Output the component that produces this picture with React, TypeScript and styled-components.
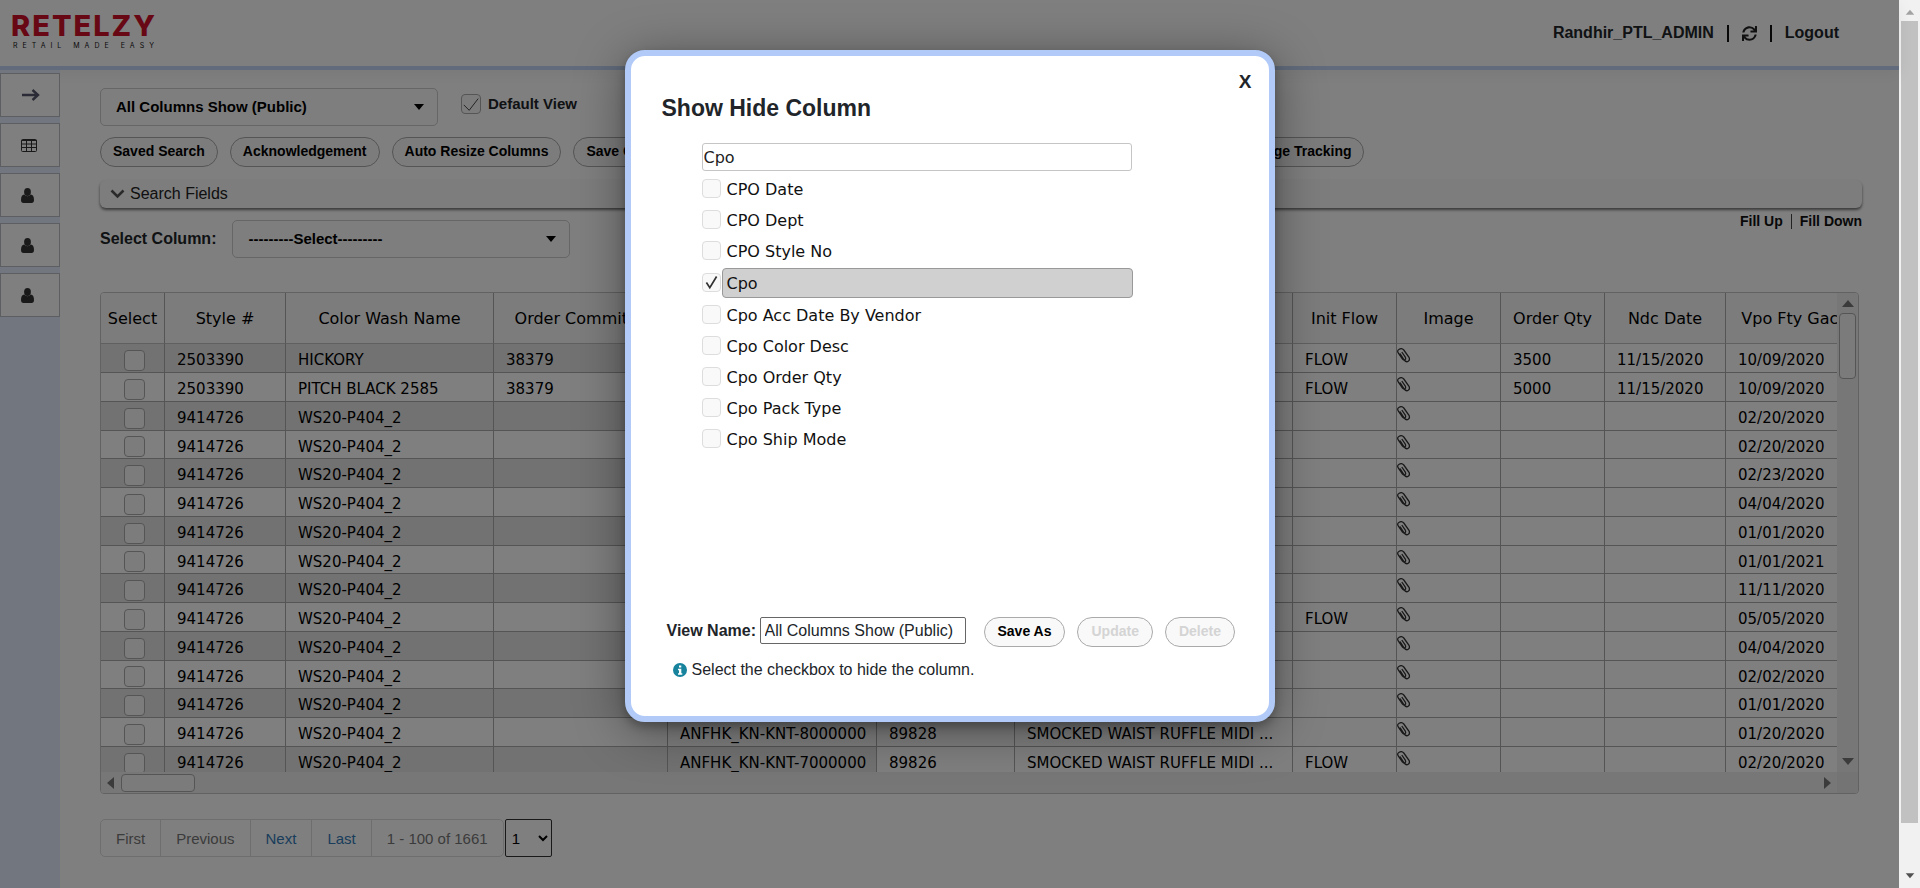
import React from "react";
import styled, { createGlobalStyle, css } from "styled-components";

const sans = `"Liberation Sans", Arial, sans-serif`;
const wide = `"DejaVu Sans", Verdana, sans-serif`;

const GlobalStyle = createGlobalStyle`
  *, *::before, *::after { box-sizing: border-box; }
  body { margin: 0; background: #fff; color: #212529; font: 16px/24px ${sans}; }
  button, input, select { font: inherit; color: inherit; margin: 0; }
  a { color: inherit; text-decoration: none; }
`;

const Shell = styled.div`
  display: flex;
  height: 100vh;
  overflow: hidden;
`;

const Page = styled.div`
  position: relative;
  display: flex;
  flex-direction: column;
  flex: 1;
  min-width: 0;
`;

const WindowScrollbar = styled.div`
  display: flex;
  flex-direction: column;
  align-items: center;
  width: 21px;
  padding: 7px 0;
  background: #f1f1f1;
`;

const WindowTrack = styled.div`
  flex: 1;
  width: 17px;
  margin: 4px 0;
  padding-bottom: 44px;
`;

const WindowThumb = styled.div`
  height: 100%;
  background: #c1c1c1;
`;

const Header = styled.header`
  display: flex;
  justify-content: space-between;
  height: 70px;
  padding: 9px 60px 0 11px;
  border-bottom: 4px solid #c3d7f7;
  box-shadow: 0 4px 16px rgba(0, 0, 0, 0.06);
`;

const Logo = styled.div`
  display: flex;
  flex-direction: column;
`;

const Wordmark = styled.span`
  font: 800 29px/33px Inter, sans-serif;
  letter-spacing: 2px;
  color: #d0112b;
`;

const Tagline = styled.span`
  padding-left: 2px;
  font: 7px/7px Inter, sans-serif;
  letter-spacing: 5px;
  color: #111;
`;

const UserNav = styled.nav`
  display: flex;
  align-items: center;
  gap: 13px;
  height: 48px;
  font-weight: 700;
`;

const NavBar = styled.span`
  width: 2px;
  height: 17px;
  background: #111;
`;

const IconButton = styled.button`
  display: flex;
  padding: 0;
  border: 0;
  background: none;
`;

const Body = styled.div`
  display: flex;
  flex: 1;
  min-height: 0;
`;

const Sidebar = styled.nav`
  display: flex;
  flex-direction: column;
  gap: 6px;
  width: 60px;
  padding-top: 3px;
  background: #e4ecff;
`;

const SideButton = styled.button`
  display: flex;
  align-items: center;
  height: 44px;
  padding: 0 0 0 20px;
  border: 1px solid #b9bdc4;
  background: #fff;
`;

const Main = styled.main`
  flex: 1;
  min-width: 0;
  padding: 18px 37px 0 40px;
`;

const ViewRow = styled.div`
  display: flex;
  gap: 23px;
`;

const SelectWrap = styled.div`
  display: grid;
  align-items: center;
  width: 338px;
  height: 38px;

  > * { grid-area: 1 / 1; }
  > svg { justify-self: end; margin-right: 13px; pointer-events: none; }
`;

const BigSelect = styled.select`
  width: 100%;
  height: 100%;
  padding: 0 15px;
  border: 1px solid #ccc;
  border-radius: 5px;
  appearance: none;
  background: #fcfcfc;
  color: #000;
  font-size: 15px;
  font-weight: 700;
`;

const TickLabel = styled.label`
  display: flex;
  align-items: center;
  gap: 7px;
  height: 32px;
  font-size: 15px;
  font-weight: 700;
`;

const tick = (path: string, stroke: string, w: number) =>
  `url("data:image/svg+xml,%3Csvg xmlns='http://www.w3.org/2000/svg' viewBox='0 0 20 20'%3E%3Cpath d='${path}' fill='none' stroke='%23${stroke}' stroke-width='${w}'/%3E%3C/svg%3E")`;

const Tick = styled.input.attrs({ type: "checkbox" })<{ $size: number; $line: string; $bold?: boolean }>`
  appearance: none;
  flex: none;
  width: ${(p) => p.$size}px;
  height: ${(p) => p.$size}px;
  border: 1px solid ${(p) => p.$line};
  border-radius: 4px;
  background: #f9f9f9;

  &:checked {
    background-image: ${(p) => (p.$bold ? tick("M4 10l4 6 8-13", "333", 2) : tick("M2 11l6 6L18 4", "333", 1))};
  }
`;

const ActionRow = styled.div`
  display: flex;
  gap: 12px;
  margin-top: 11px;
`;

const Pill = styled.button`
  height: 30px;
  padding: 0 12px 2px;
  border: 1px solid #aaa;
  border-radius: 15px;
  background: #f9f9f9;
  color: #000;
  font-size: 14px;
  font-weight: 700;
  white-space: nowrap;

  &:disabled { color: #d4d4d4; }
`;

const SearchPanel = styled.button`
  display: flex;
  align-items: center;
  gap: 5px;
  width: 100%;
  height: 28px;
  margin-top: 13px;
  padding: 0 10px;
  border: 0;
  border-radius: 6px;
  background: #fafafa;
  box-shadow: 0 2px 3px rgba(0, 0, 0, 0.55);
  color: #222;
`;

const ColumnRow = styled.div`
  display: flex;
  align-items: flex-start;
  gap: 16px;
  margin-top: 12px;
`;

const ColumnLabel = styled.label`
  padding-top: 7px;
  font-weight: 700;
`;

const FillLinks = styled.div`
  display: flex;
  align-items: center;
  gap: 8px;
  height: 2px;
  margin-left: auto;
  font-size: 14px;
  font-weight: 700;
  color: #111;
`;

const ThinBar = styled.span`
  width: 1px;
  height: 15px;
  background: #444;
`;

const Grid = styled.section`
  display: grid;
  grid-template-columns: minmax(0, 1fr) 21px;
  grid-template-rows: 479px 21px;
  margin: 34px 3px 0 0;
  border: 1px solid #c5c5c5;
  border-radius: 4px;
  overflow: hidden;
`;

const GridView = styled.div`
  overflow: hidden;
`;

const Table = styled.table`
  width: 1797px;
  table-layout: fixed;
  border-collapse: separate;
  border-spacing: 0;
  font: 15px/18px ${wide};
  color: #000;
`;

const Th = styled.th`
  height: 51px;
  padding: 2px 4px 0;
  border-right: 1px solid #aaa;
  border-bottom: 1px solid #c0c0c0;
  background: #f8f8f8;
  font-size: 16px;
  font-weight: 400;
  white-space: nowrap;

  &:first-child { padding: 2px 0 0; }
`;

const Td = styled.td<{ $locked?: boolean }>`
  padding: 4px 0 0 12px;
  border-right: 1px solid #aaa;
  border-bottom: 1px solid #aaa;
  white-space: nowrap;
  overflow: hidden;
  ${(p) => p.$locked && css`tr:nth-child(odd) > & { background: #e4e4e4; }`}
`;

const Tr = styled.tr`
  height: 29px;
  &:nth-child(4n) { height: 28px; }
`;

const TickCell = styled(Td)`
  padding: 4px 0 0 4px;
  > input { display: block; margin: 0 auto; }
`;

const ClipCell = styled(Td)`
  padding: 4px 0 0;
  vertical-align: top;
  > svg { display: block; }
`;

const VBar = styled.div`
  display: flex;
  flex-direction: column;
  align-items: center;
  padding: 3px 0;
  background: #efefef;
`;

const HBar = styled.div`
  display: flex;
  align-items: center;
  padding: 0 2px;
  background: #efefef;
`;

const BarThumb = styled.div<{ $upright?: boolean }>`
  width: ${(p) => (p.$upright ? 17 : 74)}px;
  height: ${(p) => (p.$upright ? 66 : 18)}px;
  margin: ${(p) => (p.$upright ? "3px 0 auto" : "0 auto 0 4px")};
  border: 1px solid #aaa;
  border-radius: 4px;
  background: #f6f6f6;
`;

const Corner = styled.div`
  background: #e9e9e9;
`;

const Pager = styled.nav`
  display: flex;
  gap: 1px;
  margin-top: 25px;
  font-size: 15px;
`;

const PageLinks = styled.div`
  display: flex;
  border: 1px solid #ddd;
  border-radius: 5px;
  overflow: hidden;
`;

const PageLink = styled.a<{ $active?: boolean }>`
  padding: 7px 15px 5px;
  color: ${(p) => (p.$active ? "#337ab7" : "#777")};
  & + & { border-left: 1px solid #ddd; }
`;

const PageInfo = styled.span`
  padding: 7px 15px 5px;
  border-left: 1px solid #ddd;
  color: #777;
`;

const PageSelect = styled.select`
  width: 47px;
  height: 38px;
  padding: 0 2px;
  border: 1px solid #333;
  border-radius: 2px;
  background: #fff;
  color: #000;
`;

const Overlay = styled.div`
  position: absolute;
  inset: 0;
  display: flex;
  align-items: flex-start;
  justify-content: center;
  padding-top: 50px;
  background: rgba(0, 0, 0, 0.5);
`;

const Dialog = styled.div`
  display: flex;
  flex-direction: column;
  width: 650px;
  height: 672px;
  padding: 14px 31px 34px;
  border: 6px solid #b1caf8;
  border-radius: 20px;
  background: #fff;
  box-shadow: 0 5px 10px rgba(0, 0, 0, 0.25), 0 8px 50px rgba(0, 0, 0, 0.4);
`;

const CloseButton = styled.button`
  align-self: flex-end;
  margin-right: -14px;
  padding: 0;
  border: 0;
  background: none;
  font-size: 19px;
  font-weight: 700;
`;

const Title = styled.h2`
  margin: 0;
  font-size: 23px;
  line-height: 28px;
`;

const FilterInput = styled.input`
  flex: none;
  width: 430px;
  height: 28px;
  margin: 21px 0 2px 40px;
  padding: 0 1px;
  border: 1px solid #c5c5c5;
  border-radius: 3px;
  font-family: ${wide};
  color: #222;
`;

const ColumnList = styled.ul`
  flex: 1;
  margin: 0 0 0 40px;
  padding: 0;
  list-style: none;
`;

const ColumnItem = styled.label<{ $on?: boolean }>`
  display: flex;
  align-items: center;
  gap: 1px;
  width: 431px;
  height: ${(p) => (p.$on ? 33 : 31)}px;
  font-family: ${wide};
  color: #111;
`;

const ColumnName = styled.span<{ $on?: boolean }>`
  flex: 1;
  padding: 3px 4px 1px;
  border: 1px solid ${(p) => (p.$on ? "#999" : "transparent")};
  border-radius: 4px;
  background: ${(p) => (p.$on ? "#d0d0d0" : "none")};
`;

const NameRow = styled.div`
  display: flex;
  align-items: flex-start;
  padding-left: 5px;
`;

const NameLabel = styled.label`
  width: 93px;
  padding-top: 2px;
  font-weight: 700;
`;

const NameInput = styled.input`
  width: 206px;
  height: 27px;
  margin-right: 18px;
  padding: 0 4px;
  border: 1px solid #666;
  border-radius: 2px;
`;

const NameActions = styled.div`
  display: flex;
  gap: 12px;

  > ${Pill} { padding: 0 13px 2px; }
`;

const Hint = styled.p`
  display: flex;
  align-items: center;
  gap: 5px;
  margin: 11px 0 0;
  padding-left: 11px;
`;

const Triangle = ({ dir, color = "#777", size = 14 }: { dir: "up" | "down" | "left" | "right"; color?: string; size?: number }) => {
  const turn = { up: 0, right: 90, down: 180, left: 270 }[dir];
  return (
    <svg width={size} height={size} viewBox="0 0 14 14">
      <path d="M1 11L7 4l6 7z" fill={color} transform={`rotate(${turn} 7 7)`} />
    </svg>
  );
};

const Caret = () => (
  <svg width="12" height="12" viewBox="0 0 12 12"><path d="M1 3h10L6 9z" fill="#000" /></svg>
);

const UserIcon = () => (
  <svg width="13" height="15" viewBox="0 0 13 15" fill="#333">
    <ellipse cx="6.500" cy="4" rx="3.400" ry="4" />
    <path d="M3.200 6.600Q0 7 0 12q0 3 2.500 3h8Q13 15 13 12q0-5-3.200-5.400Q8.400 8.300 6.500 8.300T3.200 6.600z" />
  </svg>
);

const TableIcon = () => (
  <svg width="16" height="13" viewBox="0 0 16 13" fill="none" stroke="#333">
    <rect x="0.500" y="0.500" width="15" height="12" rx="1" />
    <path d="M.5 1.500h15M.5 5h15M.5 8.500h15M5.500 1v11M10.500 1v11" />
  </svg>
);

const ArrowIcon = () => (
  <svg width="19" height="12" viewBox="0 0 19 12" fill="none" stroke="#56566e" strokeWidth="2.400">
    <path d="M1 6h16M11.500 1l5.500 5-5.500 5" />
  </svg>
);

const RefreshIcon = () => (
  <svg width="15" height="15" viewBox="0 0 512 512" fill="#222">
    <path d="M440.650 12.570l4 82.770A247.160 247.160 0 0 0 255.830 8C134.730 8 33.910 94.920 12.290 209.820A12 12 0 0 0 24.090 224h49.050a12 12 0 0 0 11.670-9.260 175.910 175.910 0 0 1 317-56.940l-101.460-4.860a12 12 0 0 0-12.570 12v47.410a12 12 0 0 0 12 12H500a12 12 0 0 0 12-12V12a12 12 0 0 0-12-12h-47.370a12 12 0 0 0-11.980 12.570zM255.830 432a175.610 175.610 0 0 1-146-77.800l101.800 4.870a12 12 0 0 0 12.570-12v-47.400a12 12 0 0 0-12-12H12a12 12 0 0 0-12 12V500a12 12 0 0 0 12 12h47.350a12 12 0 0 0 12-12.600l-4.150-82.570A247.170 247.170 0 0 0 255.830 504c121.110 0 221.930-86.920 243.550-201.820a12 12 0 0 0-11.800-14.180h-49.050a12 12 0 0 0-11.670 9.260A175.860 175.860 0 0 1 255.830 432z" />
  </svg>
);

const ChevronIcon = () => (
  <svg width="15" height="10" viewBox="0 0 15 10" fill="none" stroke="#555" strokeWidth="2.500">
    <path d="M1.500 1.500l6 6 6-6" />
  </svg>
);

const ClipIcon = () => (
  <svg width="14" height="15" viewBox="0 0 14 15" fill="none" stroke="#333" strokeWidth="1.300">
    <path d="M3 5.500l4.200 6.500q2 2.600 4 1.300t.8-4L6.800 2Q4.800-.2 2.200 1.200t-.8 4L5.500 11q1.600 1.600 2.600.6t.2-2.400L4.800 4" />
  </svg>
);

const InfoIcon = () => (
  <svg width="14" height="14" viewBox="0 0 14 14">
    <circle cx="7" cy="7" r="7" fill="#17839d" />
    <path d="M6 2.500h2.300v2H6zM5 5.800h3.300v4.400H9.300v1.500H5v-1.500h1V7.200H5z" fill="#fff" />
  </svg>
);

const columns: [string, number][] = [
  ["Select", 64], ["Style #", 121], ["Color Wash Name", 208], ["Order Commit #", 174],
  ["Vpo", 209], ["Cpo", 138], ["Style Desc", 278], ["Init Flow", 104], ["Image", 104],
  ["Order Qty", 104], ["Ndc Date", 121], ["Vpo Fty Gac Date", 172],
];

const rows = [
  { style: "2503390", wash: "HICKORY", commit: "38379", vpo: "", cpo: "", flow: "FLOW", qty: "3500", ndc: "11/15/2020", gac: "10/09/2020" },
  { style: "2503390", wash: "PITCH BLACK 2585", commit: "38379", vpo: "", cpo: "", flow: "FLOW", qty: "5000", ndc: "11/15/2020", gac: "10/09/2020" },
  ...["02/20/2020", "02/20/2020", "02/23/2020", "04/04/2020", "01/01/2020", "01/01/2021", "11/11/2020",
    "05/05/2020", "04/04/2020", "02/02/2020", "01/01/2020", "01/20/2020", "02/20/2020"].map((gac, i) => ({
    style: "9414726", wash: "WS20-P404_2", commit: "", qty: "", ndc: "", gac,
    vpo: i === 11 ? "ANFHK_KN-KNT-8000000" : i === 12 ? "ANFHK_KN-KNT-7000000" : "",
    cpo: i === 11 ? "89828" : i === 12 ? "89826" : "",
    flow: i === 7 || i === 12 ? "FLOW" : "",
  })),
];

const actions = ["Saved Search", "Acknowledgement", "Auto Resize Columns", "Save Column Size", "Show Hide Column", "Export to Excel", "Mass Update Columns", "Change Tracking"];

const matches = ["CPO Date", "CPO Dept", "CPO Style No", "Cpo", "Cpo Acc Date By Vendor", "Cpo Color Desc", "Cpo Order Qty", "Cpo Pack Type", "Cpo Ship Mode"];

export default function App() {
  return (
    <Shell>
      <GlobalStyle />
      <Page>
        <Header>
          <Logo>
            <Wordmark>RETELZY</Wordmark>
            <Tagline>RETAIL MADE EASY</Tagline>
          </Logo>
          <UserNav>
            <span>Randhir_PTL_ADMIN</span>
            <NavBar />
            <IconButton aria-label="Refresh"><RefreshIcon /></IconButton>
            <NavBar />
            <a href="#logout">Logout</a>
          </UserNav>
        </Header>
        <Body>
          <Sidebar>
            <SideButton aria-label="Expand"><ArrowIcon /></SideButton>
            <SideButton aria-label="Grid"><TableIcon /></SideButton>
            {[1, 2, 3].map((n) => (
              <SideButton key={n} aria-label={`User ${n}`}><UserIcon /></SideButton>
            ))}
          </Sidebar>
          <Main>
            <ViewRow>
              <SelectWrap>
                <BigSelect aria-label="View"><option>All Columns Show (Public)</option></BigSelect>
                <Caret />
              </SelectWrap>
              <TickLabel>
                <Tick $size={20} $line="#aaa" defaultChecked />
                Default View
              </TickLabel>
            </ViewRow>
            <ActionRow>
              {actions.map((a) => <Pill key={a}>{a}</Pill>)}
            </ActionRow>
            <SearchPanel><ChevronIcon />Search Fields</SearchPanel>
            <ColumnRow>
              <ColumnLabel htmlFor="column">Select Column:</ColumnLabel>
              <SelectWrap>
                <BigSelect id="column"><option>---------Select---------</option></BigSelect>
                <Caret />
              </SelectWrap>
              <FillLinks>
                <a href="#up">Fill Up</a>
                <ThinBar />
                <a href="#down">Fill Down</a>
              </FillLinks>
            </ColumnRow>
            <Grid>
              <GridView>
                <Table>
                  <colgroup>
                    {columns.map(([name, w]) => <col key={name} style={{ width: w }} />)}
                  </colgroup>
                  <thead>
                    <tr>{columns.map(([name]) => <Th key={name}>{name}</Th>)}</tr>
                  </thead>
                  <tbody>
                    {rows.map((r, i) => (
                      <Tr key={i}>
                        <TickCell $locked><Tick $size={21} $line="#aaa" aria-label={`Select row ${i + 1}`} /></TickCell>
                        <Td $locked>{r.style}</Td>
                        <Td $locked>{r.wash}</Td>
                        <Td $locked>{r.commit}</Td>
                        <Td $locked>{r.vpo}</Td>
                        <Td>{r.cpo}</Td>
                        <Td>SMOCKED WAIST RUFFLE MIDI ...</Td>
                        <Td>{r.flow}</Td>
                        <ClipCell><ClipIcon /></ClipCell>
                        <Td>{r.qty}</Td>
                        <Td>{r.ndc}</Td>
                        <Td>{r.gac}</Td>
                      </Tr>
                    ))}
                  </tbody>
                </Table>
              </GridView>
              <VBar><Triangle dir="up" /><BarThumb $upright /><Triangle dir="down" /></VBar>
              <HBar><Triangle dir="left" /><BarThumb /><Triangle dir="right" /></HBar>
              <Corner />
            </Grid>
            <Pager>
              <PageLinks>
                <PageLink href="#first">First</PageLink>
                <PageLink href="#previous">Previous</PageLink>
                <PageLink href="#next" $active>Next</PageLink>
                <PageLink href="#last" $active>Last</PageLink>
                <PageInfo>1 - 100 of 1661</PageInfo>
              </PageLinks>
              <PageSelect aria-label="Page"><option>1</option></PageSelect>
            </Pager>
          </Main>
        </Body>
        <Overlay>
          <Dialog role="dialog" aria-labelledby="dialog-title">
            <CloseButton>X</CloseButton>
            <Title id="dialog-title">Show Hide Column</Title>
            <FilterInput aria-label="Filter columns" defaultValue="Cpo" />
            <ColumnList>
              {matches.map((m) => {
                const on = m === "Cpo";
                return (
                  <li key={m}>
                    <ColumnItem $on={on}>
                      <Tick $size={19} $line="#ddd" $bold defaultChecked={on} />
                      <ColumnName $on={on}>{m}</ColumnName>
                    </ColumnItem>
                  </li>
                );
              })}
            </ColumnList>
            <NameRow>
              <NameLabel htmlFor="view-name">View Name:</NameLabel>
              <NameInput id="view-name" defaultValue="All Columns Show (Public)" />
              <NameActions>
                <Pill>Save As</Pill>
                <Pill disabled>Update</Pill>
                <Pill disabled>Delete</Pill>
              </NameActions>
            </NameRow>
            <Hint><InfoIcon />Select the checkbox to hide the column.</Hint>
          </Dialog>
        </Overlay>
      </Page>
      <WindowScrollbar>
        <Triangle dir="up" color="#a3a3a3" size={10} />
        <WindowTrack><WindowThumb /></WindowTrack>
        <Triangle dir="down" color="#505050" size={10} />
      </WindowScrollbar>
    </Shell>
  );
}
